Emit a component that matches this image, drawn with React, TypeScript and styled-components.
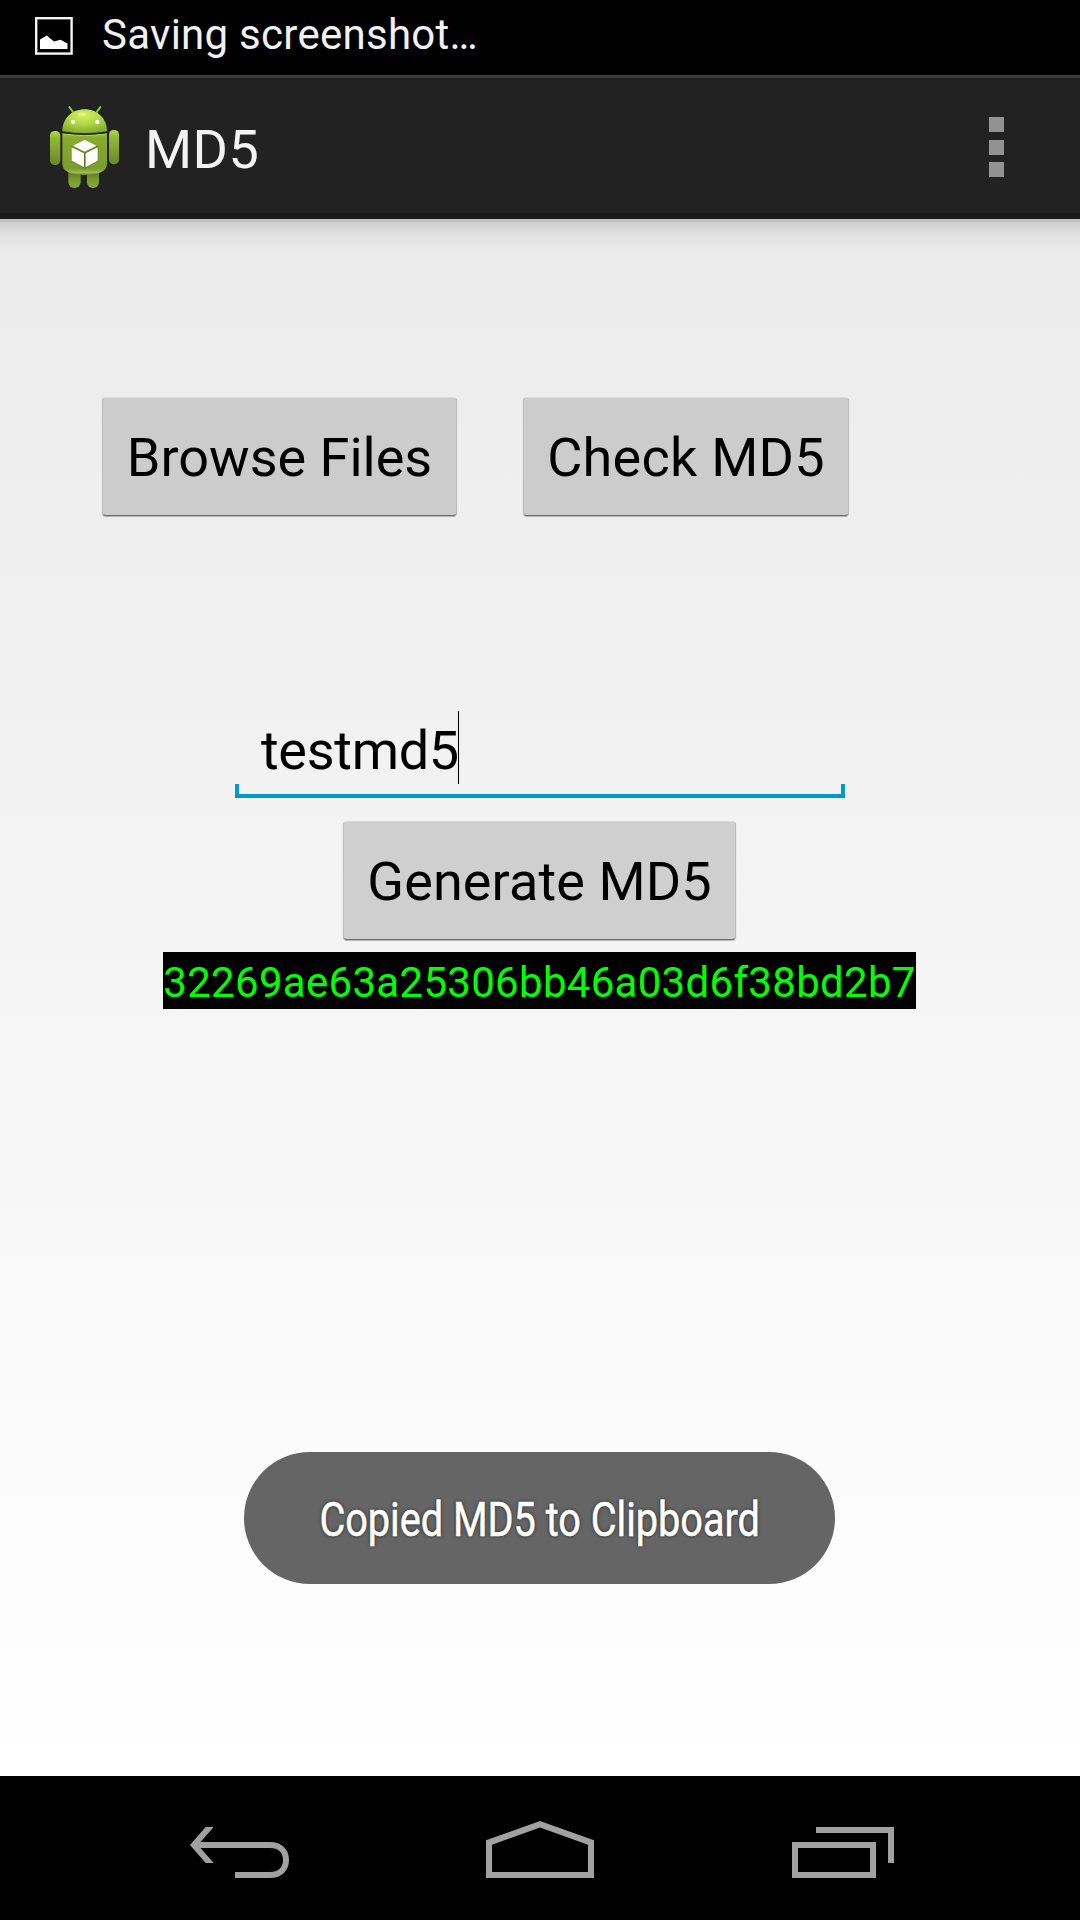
import React from "react";
import styled, { createGlobalStyle } from "styled-components";

const GlobalStyle = createGlobalStyle`
  *, *::before, *::after { box-sizing: border-box; }
  body { margin: 0; background: #000; font-family: Roboto, "Noto Sans", sans-serif; }
  #root { font-size: 54px; }
`;

const Screen = styled.div`
  position: relative;
  display: flex;
  flex-direction: column;
  width: 1080px;
  height: 1920px;
  overflow: hidden;
`;

const Label = styled.span<{ $tracking?: number }>`
  display: block;
  white-space: nowrap;
  letter-spacing: ${(p) => p.$tracking ?? 0}px;
`;

const StatusBar = styled.header`
  flex: 0 0 75px;
  display: flex;
  align-items: flex-start;
  gap: 29px;
  padding: 17px 0 0 35px;
  background: #000;
  color: #f1f1f1;
  font-size: 42px;
  line-height: 50px;

  svg { display: block; flex: none; }
  span { margin-top: -7px; }
`;

const ActionBar = styled.div`
  flex: 0 0 144px;
  display: flex;
  align-items: flex-start;
  padding: 17px 76px 0 40px;
  background: #222;
  border-top: 3px solid #3b3b3b;
  border-bottom: 6px solid #1b1b1b;

  svg { display: block; flex: none; }
`;

const Title = styled.h1`
  flex: 1;
  margin: 23px 0 0 15px;
  color: #f3f3f3;
  font-size: 54px;
  font-weight: 400;
  line-height: 64px;
`;

const Overflow = styled.button`
  display: flex;
  flex-direction: column;
  gap: 7.5px;
  margin: 22px 0 0;
  padding: 0;
  border: 0;
  background: none;
`;

const Dot = styled.i`
  width: 15px;
  height: 15px;
  background: #929292;
`;

const Content = styled.main`
  flex: 1;
  display: flex;
  flex-direction: column;
  align-items: center;
  background:
    linear-gradient(rgba(0, 0, 0, 0.18) 0 3px, rgba(0, 0, 0, 0.12) 3px, rgba(0, 0, 0, 0.055) 14px, rgba(0, 0, 0, 0.015) 26px, transparent 36px),
    linear-gradient(#ebebeb, #fff);
`;

const FileActions = styled.div`
  align-self: flex-start;
  display: flex;
  gap: 66px;
  margin: 178px 0 0 102px;
`;

const Button = styled.button<{ $width: number; $shade?: string }>`
  display: flex;
  justify-content: center;
  width: ${(p) => p.$width}px;
  height: 119px;
  padding: 28px 0 0;
  border: 1px solid #bdbdbd;
  border-top-color: #dadada;
  border-bottom: 1px solid #6c6c6c;
  border-radius: 4px;
  background: ${(p) => p.$shade ?? "#ccc"};
  box-shadow: 0 1px 1px rgba(0, 0, 0, 0.25);
  color: #000;
  font: 400 54px/64px Roboto, "Noto Sans", sans-serif;
`;

const Field = styled.div`
  display: flex;
  align-items: flex-start;
  width: 610px;
  height: 87px;
  margin-top: 195px;
  padding-left: 26px;
  background:
    linear-gradient(#0099cc, #0099cc) left bottom / 100% 4px no-repeat,
    linear-gradient(#0099cc, #0099cc) left bottom / 4px 14px no-repeat,
    linear-gradient(#0099cc, #0099cc) right bottom / 4px 14px no-repeat;
  color: #000;
  line-height: 64px;

  span { width: 197px; margin-top: 8px; }
`;

const Caret = styled.i`
  width: 1px;
  height: 73px;
  background: #000;
  box-shadow: 0 0 1px rgba(0, 0, 0, 0.35);
`;

const GenerateRow = styled.div`
  margin: 23px 1px 12px 0;
`;

const Hash = styled.output`
  display: flex;
  justify-content: center;
  width: 753px;
  height: 57px;
  margin-right: 1px;
  background: #000;
  color: #0f0;
  font-size: 42px;
  line-height: 61px;
`;

const Toast = styled.div`
  position: absolute;
  left: 244px;
  top: 1452px;
  display: flex;
  justify-content: center;
  width: 591px;
  height: 132px;
  border-radius: 66px;
  background: #656565;
  color: #fff;
  font-size: 48px;
  line-height: 135px;
  text-shadow: 0 0 4px rgba(0, 0, 0, 0.75);
  -webkit-text-stroke: 0.6px #fff;

  span { transform: scaleX(0.826); }
`;

const NavBar = styled.nav`
  flex: 0 0 144px;
  display: flex;
  justify-content: space-between;
  padding: 0 180px;
  background: #000;

  svg { display: block; }
`;

const PictureIcon = () => (
  <svg width="38" height="38" viewBox="0 0 38 38">
    <rect x="1.2" y="1.2" width="35.4" height="35.4" fill="none" stroke="#f4f4f4" strokeWidth="2.4" />
    <path d="M5 32V22.5L11.8 18.5L19 24.5L25.5 22.8L32.5 26.5V32Z" fill="#fff" />
  </svg>
);

const RobotIcon = () => (
  <svg width="90" height="100" viewBox="0 0 270 300">
    <defs>
      <radialGradient id="head" cx="0.48" cy="0.25" r="0.75">
        <stop offset="0" stopColor="#d3f268" />
        <stop offset="0.45" stopColor="#b2db48" />
        <stop offset="1" stopColor="#86ac2b" />
      </radialGradient>
      <linearGradient id="torso" x1="0" y1="0" x2="0" y2="1">
        <stop offset="0" stopColor="#91b832" />
        <stop offset="0.15" stopColor="#87aa2e" />
        <stop offset="0.85" stopColor="#7b9c2d" />
        <stop offset="0.94" stopColor="#9bbc55" />
        <stop offset="1" stopColor="#66852a" />
      </linearGradient>
      <linearGradient id="limb" x1="0" y1="0" x2="0" y2="1">
        <stop offset="0" stopColor="#b6dc4f" />
        <stop offset="0.2" stopColor="#93ba34" />
        <stop offset="1" stopColor="#69872a" />
      </linearGradient>
      <linearGradient id="foot" x1="0" y1="0" x2="0" y2="1">
        <stop offset="0" stopColor="#48601a" />
        <stop offset="0.6" stopColor="#799b31" />
        <stop offset="1" stopColor="#86a544" />
      </linearGradient>
    </defs>
    <path d="M88 36L101 54M181 36L168 54" stroke="#9cc43c" strokeWidth="6" strokeLinecap="round" />
    <rect x="85" y="215" width="37" height="64" rx="17" fill="url(#foot)" />
    <rect x="141" y="215" width="36" height="64" rx="17" fill="url(#foot)" />
    <rect x="30" y="108" width="31" height="102" rx="14" fill="url(#limb)" />
    <rect x="207" y="105" width="30" height="103" rx="14" fill="url(#limb)" />
    <path d="M67 115Q134 123 201 115V207Q201 238 134 240Q67 238 67 207Z" fill="url(#torso)" />
    <path d="M69 118Q134 126 199 118" fill="none" stroke="#b5d85b" strokeWidth="2.5" />
    <path d="M67 109C67 70 96 43 134 43S201 70 201 109Q134 121 67 109Z" fill="url(#head)" />
    <path d="M67 112Q134 124 201 112" fill="none" stroke="#1d260c" strokeWidth="3" />
    <ellipse cx="126" cy="58" rx="12" ry="6" fill="#f3eb9a" opacity="0.7" />
    <circle cx="99" cy="81" r="6.5" fill="#fff" />
    <circle cx="172" cy="81" r="6.5" fill="#fff" />
    <path d="M134 133L175 154V199L134 222L94 199V154Z" fill="#55711d" opacity="0.65" />
    <path d="M134 134L170 152L134 170L98 152Z" fill="#fff" />
    <path d="M95 157L132 175V217L95 197ZM137 175L173 157V197L137 217Z" fill="#fff" />
  </svg>
);

const NAV_COLOR = "#a1a1a1";

const BackIcon = () => (
  <svg width="120" height="144" viewBox="0 0 120 144">
    <path d="M10 69L25.7 51H33.7L20.5 66H21V72H20.5L33.7 87H25.7Z" fill={NAV_COLOR} />
    <path d="M19 69H90C100 69 106 75 106 84S100 99 90 99H55" fill="none" stroke={NAV_COLOR} strokeWidth="6" />
  </svg>
);

const HomeIcon = () => (
  <svg width="120" height="144" viewBox="0 0 120 144">
    <path
      fillRule="evenodd"
      d="M60 45L114 64.3V102H6V64.3ZM60 51.5L12 68.8V96H108V68.8Z"
      fill={NAV_COLOR}
    />
  </svg>
);

const RecentsIcon = () => (
  <svg width="120" height="144" viewBox="0 0 120 144">
    <path d="M15 69H93V99H15ZM36 54H111V87" fill="none" stroke={NAV_COLOR} strokeWidth="6" />
  </svg>
);

export default function App() {
  return (
    <Screen>
      <GlobalStyle />
      <StatusBar>
        <PictureIcon />
        <Label $tracking={0.27}>Saving screenshot…</Label>
      </StatusBar>
      <ActionBar>
        <RobotIcon />
        <Title>
          <Label $tracking={0.4}>MD5</Label>
        </Title>
        <Overflow aria-label="More options">
          <Dot />
          <Dot />
          <Dot />
        </Overflow>
      </ActionBar>
      <Content>
        <FileActions>
          <Button $width={355}>
            <Label>Browse Files</Label>
          </Button>
          <Button $width={326}>
            <Label $tracking={0.25}>Check MD5</Label>
          </Button>
        </FileActions>
        <Field>
          <Label $tracking={-0.3}>testmd5</Label>
          <Caret />
        </Field>
        <GenerateRow>
          <Button $width={393} $shade="#cfcfcf">
            <Label $tracking={0.1}>Generate MD5</Label>
          </Button>
        </GenerateRow>
        <Hash>
          <Label $tracking={0.3}>32269ae63a25306bb46a03d6f38bd2b7</Label>
        </Hash>
      </Content>
      <NavBar>
        <BackIcon />
        <HomeIcon />
        <RecentsIcon />
      </NavBar>
      <Toast role="status">
        <Label>Copied MD5 to Clipboard</Label>
      </Toast>
    </Screen>
  );
}
